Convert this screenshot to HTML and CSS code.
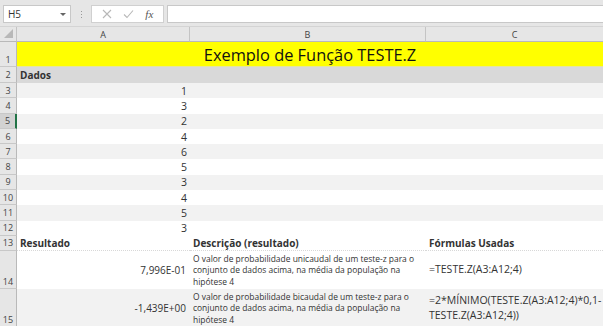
FILE: index.html
```html
<!DOCTYPE html>
<html lang="pt">
<head>
<meta charset="utf-8">
<link rel="stylesheet" href="styles.css">
</head>
<body>
<div class="app">
  <div class="toolbar">
    <div class="namebox"><span>H5</span><span class="caret"></span></div>
    <div class="grip"><i></i><i></i><i></i></div>
    <div class="fbtns">
      <svg class="ico" width="10" height="10" viewBox="0 0 10 10"><path d="M1 1L9 9M9 1L1 9" stroke="#b8b8b8" stroke-width="1.1" fill="none"/></svg>
      <svg class="ico" width="11" height="10" viewBox="0 0 11 10"><path d="M1 5.5L4 8.5L10 1.5" stroke="#b8b8b8" stroke-width="1.1" fill="none"/></svg>
      <span class="fx">fx</span>
    </div>
    <div class="finput"></div>
  </div>
  <div class="sheet">
    <div class="corner"><span class="tri"></span></div>
    <div class="colh">A</div>
    <div class="colh">B</div>
    <div class="colh last">C</div>

    <div class="rowh bottom">1</div>
    <div class="title">Exemplo de Função TESTE.Z</div>

    <div class="rowh">2</div>
    <div class="c band bold">Dados</div>
    <div class="c band"></div>
    <div class="c band"></div>

    <div class="rowh">3</div><div class="c g num">1</div><div class="c g"></div><div class="c g"></div>
    <div class="rowh">4</div><div class="c num">3</div><div class="c"></div><div class="c"></div>
    <div class="rowh active">5</div><div class="c g num">2</div><div class="c g"></div><div class="c g"></div>
    <div class="rowh">6</div><div class="c num">4</div><div class="c"></div><div class="c"></div>
    <div class="rowh">7</div><div class="c g num">6</div><div class="c g"></div><div class="c g"></div>
    <div class="rowh">8</div><div class="c num">5</div><div class="c"></div><div class="c"></div>
    <div class="rowh">9</div><div class="c g num">3</div><div class="c g"></div><div class="c g"></div>
    <div class="rowh">10</div><div class="c num">4</div><div class="c"></div><div class="c"></div>
    <div class="rowh">11</div><div class="c g num">5</div><div class="c g"></div><div class="c g"></div>
    <div class="rowh">12</div><div class="c num">3</div><div class="c"></div><div class="c"></div>

    <div class="rowh">13</div>
    <div class="c hd bold">Resultado</div>
    <div class="c hd bold">Descrição (resultado)</div>
    <div class="c hd bold">Fórmulas Usadas</div>

    <div class="rowh bottom">14</div>
    <div class="c num res">7,996E-01</div>
    <div class="c desc">O valor de probabilidade unicaudal de um teste-z para o conjunto de dados acima, na média da população na hipótese 4</div>
    <div class="c formula">=TESTE.Z(A3:A12;4)</div>

    <div class="rowh bottom">15</div>
    <div class="c g num res">-1,439E+00</div>
    <div class="c g desc">O valor de probabilidade bicaudal de um teste-z para o conjunto de dados acima, na média da população na hipótese 4</div>
    <div class="c g formula">=2*MÍNIMO(TESTE.Z(A3:A12;4)*0,1-TESTE.Z(A3:A12;4))</div>
  </div>
</div>
</body>
</html>
```

FILE: styles.css
```css
* { box-sizing: border-box; }
html, body { margin: 0; padding: 0; }
body {
  width: 603px;
  height: 326px;
  overflow: hidden;
  background: #ffffff;
  font-family: "Open Sans", "Noto Sans", sans-serif;
  color: #222;
}
.app { width: 603px; }
.toolbar {
  height: 27px;
  background: #e6e6e6;
  display: flex;
  align-items: flex-start;
  padding-top: 5px;
  padding-left: 3px;
  border-bottom: 1px solid #d4d4d4;
}
.namebox {
  width: 68px;
  height: 18px;
  background: #fff;
  border: 1px solid #c8c8c8;
  display: flex;
  align-items: center;
  justify-content: space-between;
  padding: 0 4px 0 4px;
  font-size: 10px;
  color: #333;
}
.caret {
  width: 0; height: 0;
  border-left: 3px solid transparent;
  border-right: 3px solid transparent;
  border-top: 3px solid #666;
}
.grip {
  width: 20px;
  height: 18px;
  display: flex;
  flex-direction: column;
  align-items: center;
  justify-content: center;
  gap: 2px;
}
.grip i { display: block; width: 1px; height: 1px; background: #999; }
.fbtns {
  width: 73px;
  height: 18px;
  background: #fff;
  border: 1px solid #d0d0d0;
  display: flex;
  align-items: center;
  justify-content: space-around;
  padding: 0 4px;
}
.fx { font-family: "Liberation Serif", serif; font-style: italic; font-size: 11px; color: #555; }
.finput {
  flex: 1;
  height: 18px;
  margin-left: 3px;
  background: #fff;
  border: 1px solid #c8c8c8;
  border-right: none;
}
.sheet {
  display: grid;
  grid-template-columns: 17px 173px 236px 177px;
  grid-template-rows: 15px 25px 16px repeat(10, 15.3px) 15px 38px 38px;
  font-size: 10.5px;
}
.corner {
  background: #e6e6e6;
  border-right: 1px solid #c4c4c4;
  border-bottom: 1px solid #b9b9b9;
  position: relative;
}
.tri {
  position: absolute;
  right: 3px; bottom: 3px;
  width: 0; height: 0;
  border-left: 9px solid transparent;
  border-bottom: 9px solid #b8b8b8;
}
.colh {
  background: #e6e6e6;
  border-right: 1px solid #c4c4c4;
  border-bottom: 1px solid #b9b9b9;
  display: flex;
  align-items: center;
  justify-content: center;
  font-size: 9px;
  color: #444;
}
.colh.last { border-right: none; }
.rowh {
  background: #e6e6e6;
  border-right: 1px solid #b9b9b9;
  border-bottom: 1px solid #c8c8c8;
  display: flex;
  align-items: center;
  justify-content: center;
  font-size: 9px;
  color: #444;
  line-height: 1;
}
.rowh.bottom { align-items: flex-end; padding-bottom: 2px; }
.rowh.active { background: #d2d2d2; border-right: 2px solid #217346; }
.title {
  grid-column: 2 / 5;
  background: #ffff00;
  border-bottom: 1px solid #e6e69a;
  display: flex;
  align-items: center;
  justify-content: center;
  font-size: 16.4px;
  color: #111;
  padding-top: 1px;
}
.c {
  display: flex;
  align-items: center;
  padding: 0 3px;
  white-space: nowrap;
  overflow: hidden;
  color: #333;
}
.band { background: #d9d9d9; }
.g { background: #f2f2f2; }
.bold { font-weight: 700; color: #333; font-size: 10px; }
.hd { border-bottom: 1px dotted #d8d8d8; }
.num { justify-content: flex-end; }
.res { font-size: 10px; padding-right: 4px; }
.desc {
  white-space: normal;
  font-size: 8.45px;
  line-height: 11.5px;
  color: #333;
}
.formula {
  white-space: normal;
  font-size: 10.5px;
  line-height: 15px;
}
```
